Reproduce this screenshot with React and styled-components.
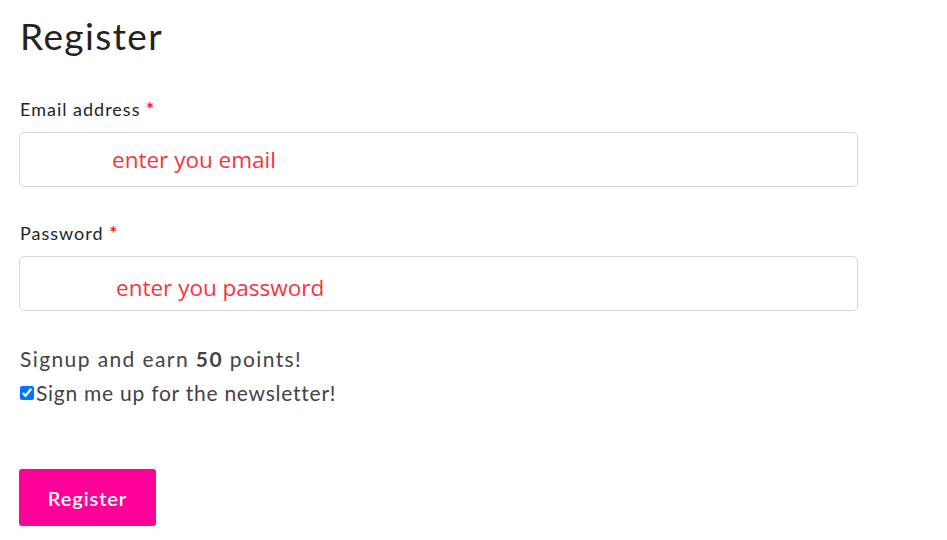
import React from 'react'
import styled, { createGlobalStyle } from 'styled-components'

const GlobalStyle = createGlobalStyle`
  body {
    margin: 0;
    background: #fff;
    font-family: Lato, "Noto Sans", sans-serif;
    color: #212529;
  }
  input::placeholder {
    color: #f5343f;
    opacity: 1;
  }
`

const Page = styled.div`
  padding: 12px 20px 0 19px;
  width: 839px;
`

const Title = styled.h1`
  font-size: 37px;
  font-weight: 400;
  line-height: 48px;
  letter-spacing: 1.4px;
  margin: 0 0 39px 1px;
  color: #222;
`

const Field = styled.div`
  display: flex;
  flex-direction: column;
  margin-bottom: ${p => p.gap}px;
`

const Label = styled.label`
  font-size: 18px;
  line-height: 20px;
  letter-spacing: 1px;
  margin: 0 0 13px 1px;
  color: #212529;
`

const Star = styled.span`
  color: #f21c1c;
  font-weight: 700;
  font-size: 19px;
`

const Input = styled.input`
  box-sizing: border-box;
  width: 839px;
  height: 55px;
  border: 1px solid #d6d5de;
  border-radius: 5px;
  padding: ${p => p.drop}px 0 0 ${p => p.indent}px;
  font-family: "Open Sans", "Noto Sans", sans-serif;
  font-size: 22.5px;
  color: #f5343f;
  outline: none;
`

const Promo = styled.p`
  margin: 0 0 4px 1px;
  font-size: 21px;
  line-height: 30px;
  letter-spacing: 1.4px;
  color: #444;
`

const Check = styled.label`
  display: flex;
  align-items: center;
  font-size: 21px;
  line-height: 30px;
  letter-spacing: 0.75px;
  color: #444;
  margin-bottom: 61px;

  input {
    margin: 0 2px 0 1px;
    width: 14px;
    height: 14px;
  }
`

const Button = styled.button`
  width: 137px;
  height: 57px;
  border: none;
  border-radius: 3px;
  background: #ff0099;
  color: #fff;
  font-family: Lato, "Noto Sans", sans-serif;
  font-size: 20px;
  font-weight: 600;
  letter-spacing: 0.9px;
  cursor: pointer;
`

export default function App() {
  return (
    <>
      <GlobalStyle />
      <Page>
        <Title>Register</Title>
        <Field gap={36}>
          <Label>Email address <Star>*</Star></Label>
          <Input indent={92} drop={0} type="email" placeholder="enter you email" />
        </Field>
        <Field gap={33}>
          <Label>Password <Star>*</Star></Label>
          <Input indent={96} drop={7} type="password" placeholder="enter you password" />
        </Field>
        <Promo>Signup and earn <b>50</b> points!</Promo>
        <Check>
          <input type="checkbox" defaultChecked />
          Sign me up for the newsletter!
        </Check>
        <Button>Register</Button>
      </Page>
    </>
  )
}
